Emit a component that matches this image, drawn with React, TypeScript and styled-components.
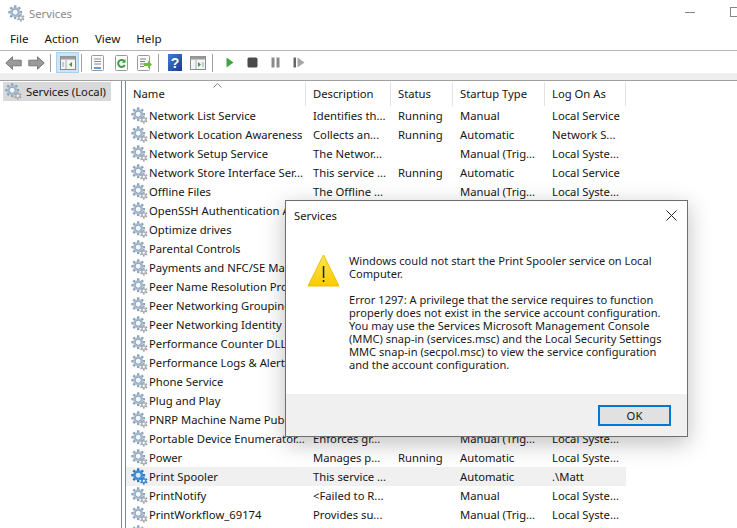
import React from 'react';
import styled, { createGlobalStyle } from 'styled-components';

const Global = createGlobalStyle`
  html, body { margin: 0; padding: 0; background: #fff; }
  #root { width: 737px; height: 528px; overflow: hidden; }
`;

const Page = styled.div`
  position: relative;
  width: 737px;
  height: 528px;
  overflow: hidden;
  background: #fff;
  font-family: "Noto Sans", "Open Sans", sans-serif;
  font-size: 11.25px;
  color: #151515;
  display: flex;
  flex-direction: column;
`;

const TitleBar = styled.div`
  height: 27px;
  display: flex;
  align-items: center;
  padding: 0 0 1px 8px;
  box-sizing: border-box;
  gap: 4px;
  color: #8a8a8a;
  position: relative;
  flex: none;
`;
const WinBtn = styled.div<{ $kind: 'min' | 'max' }>`
  position: absolute;
  box-sizing: border-box;
  ${p => p.$kind === 'min'
    ? 'left: 685px; top: 12px; width: 10px; height: 1px; background: #888;'
    : 'left: 730px; top: 7px; width: 10px; height: 10px; border: 1px solid #888;'}
`;
const MenuBar = styled.div`
  height: 23px;
  display: flex;
  align-items: center;
  padding: 1px 0 0 10px;
  box-sizing: content-box;
  gap: 16px;
  font-size: 11.6px;
  flex: none;
  border-bottom: 1px solid #b4b4b4;
  margin-top: -1px;
`;
const ToolBar = styled.div`
  height: 22px;
  padding: 1px 0 0 2px;
  box-sizing: border-box;
  display: flex;
  align-items: center;
  flex: none;
`;
const ToolBand = styled.div`
  height: 7px;
  flex: none;
  background: #eeeeee;
`;
const ToolBtn = styled.div<{ $w?: number; $on?: boolean }>`
  width: ${p => p.$w ?? 22}px;
  height: 21px;
  flex: none;
  display: flex;
  align-items: center;
  justify-content: center;
  box-sizing: border-box;
  ${p => p.$on ? 'background:#cce4f7;border:1px solid #a8d2f2;' : ''}
`;
const ToolSep = styled.div<{ $l: number; $r: number }>`
  width: 1px;
  height: 18px;
  flex: none;
  background: #a0a0a0;
  margin: 0 ${p => p.$r}px 0 ${p => p.$l}px;
`;
const Panes = styled.div`
  flex: 1;
  display: flex;
  min-height: 0;
  border-top: 1px solid #a0a0a0;
`;
const Tree = styled.div`
  width: 122px;
  flex: none;
  border-right: 1px solid #828790;
  padding: 1px 0 0 3px;
  box-sizing: border-box;
`;
const TreeItem = styled.div`
  display: flex;
  align-items: center;
  height: 19px;
  width: 108px;
  background: #d9d9d9;
  gap: 4px;
  padding: 0 0 1px 2px;
  white-space: nowrap;
  box-sizing: border-box;
`;
const ListPane = styled.div`
  margin-left: 3px;
  flex: 1;
  border-left: 1px solid #828790;
  padding-top: 1px;
  position: relative;
  min-width: 0;
`;
const Header = styled.div`
  display: flex;
  height: 24px;
  width: 500px;
`;
const HeadCell = styled.div<{ $w: number }>`
  width: ${p => p.$w}px;
  flex: none;
  padding: 0 0 2px 7px;
  box-sizing: border-box;
  border-right: 1px solid #e3e3e3;
  display: flex;
  align-items: center;
  position: relative;
`;
const SortMark = styled.svg`
  position: absolute;
  left: 87px;
  top: 1px;
`;
const Row = styled.div<{ $sel?: boolean }>`
  display: flex;
  height: 19px;
  width: 500px;
  align-items: center;
  background: ${p => p.$sel ? '#f0f0f0' : 'transparent'};
  white-space: nowrap;
`;
const Cell = styled.div<{ $w: number }>`
  width: ${p => p.$w}px;
  flex: none;
  padding-left: 7px;
  box-sizing: border-box;
`;
const NameCell = styled(Cell)`
  padding-left: 5px;
  display: flex;
  align-items: center;
  gap: 1px;
`;

const Dialog = styled.div`
  position: absolute;
  left: 285px;
  top: 200px;
  width: 403px;
  height: 237px;
  background: #fff;
  border: 1px solid #6e6e6e;
  box-sizing: border-box;
  box-shadow: 0 6px 22px rgba(0,0,0,.26);
  display: flex;
  flex-direction: column;
`;
const DialogTitle = styled.div`
  height: 30px;
  flex: none;
  display: flex;
  align-items: center;
  justify-content: space-between;
  padding: 0 10px 2px 8px;
  box-sizing: border-box;
`;
const DialogBody = styled.div`
  flex: 1;
  display: flex;
  padding: 23px 0 0 21px;
  gap: 9px;
`;
const Msg = styled.div`
  font-size: 11.1px;
  line-height: 13px;
  width: 320px;
  color: #1a1a1a;
  p { margin: 0 0 13px; }
`;
const DialogFoot = styled.div`
  height: 42px;
  flex: none;
  background: #f0f0f0;
  display: flex;
  align-items: center;
  justify-content: flex-end;
  padding-right: 16px;
`;
const OkBtn = styled.div`
  width: 73px;
  height: 21px;
  box-sizing: border-box;
  border: 2px solid #0078d7;
  background: #e1e1e1;
  display: flex;
  align-items: center;
  justify-content: center;
`;

const Gear = ({ strong }: { strong?: boolean }) => (
  <svg width="17" height="17" viewBox="0 0 17 17" style={{ flex: 'none' }}>
    <g transform="translate(7.2 7.2)">
      {[0, 45, 90, 135, 180, 225, 270, 315].map(a => (
        <rect key={a} x="-1.2" y="-6.9" width="2.4" height="3" fill={strong ? '#2a78c0' : '#8ba3bb'} transform={`rotate(${a})`} />
      ))}
      <circle r="5" fill={strong ? '#3f8fd6' : '#a9bed4'} />
      <circle r="3" fill={strong ? '#d5e9fb' : '#f5f8fb'} stroke={strong ? '#2a78c0' : '#7d94ac'} strokeWidth="0.8" />
    </g>
    <g transform="translate(12.8 12.8)">
      {[0, 60, 120, 180, 240, 300].map(a => (
        <rect key={a} x="-.8" y="-3.8" width="1.6" height="1.8" fill={strong ? '#2a78c0' : '#9a9fa6'} transform={`rotate(${a})`} />
      ))}
      <circle r="2.6" fill={strong ? '#3f8fd6' : '#b0b5bb'} />
      <circle r="1.1" fill="#fff" />
    </g>
  </svg>
);

const Arrow = ({ left }: { left?: boolean }) => (
  <svg width="17" height="14" viewBox="0 0 17 14">
    <path d={left ? 'M.8 7 7.500.8v3.400h8.700v5.600H7.500v3.400z' : 'M16.200 7 9.500.8v3.400H.8v5.600h8.700v3.400z'} fill="#9a9a9a" stroke="#6f6f6f" strokeWidth=".9" strokeLinejoin="round" />
  </svg>
);
const PaneIcon = ({ mark }: { mark: 'left' | 'right' }) => (
  <svg width="16" height="14" viewBox="0 0 16 14">
    <rect x=".5" y=".5" width="15" height="13" fill="#f4f4f4" stroke="#8a8a8a" />
    <rect x=".5" y=".5" width="15" height="3" fill="#9a9a9a" />
    <path d="M6 4v9" stroke="#aaa" />
    <path d={mark === 'left' ? 'M12 6v5L9 8.500z' : 'M8 6v5l3-2.500z'} fill="#3f9a3f" />
    <rect x={mark === 'left' ? 2 : 12} y="6" width="2" height="5" fill="#b5cfe6" />
  </svg>
);
const SheetIcon = ({ kind }: { kind: 'list' | 'refresh' | 'export' }) => (
  <svg width="16" height="16" viewBox="0 0 16 16">
    <rect x="1.500" y=".5" width="12" height="15" rx="1" fill="#fbfbfb" stroke="#9a9a9a" />
    {kind === 'list' && <path d="M4 4h7M4 6.500h7M4 9h7" stroke="#8a8a8a" />}
    {kind === 'list' && <rect x="4" y="12" width="7" height="2" fill="#5aa0dc" />}
    {kind === 'refresh' && <path d="M10.800 10a3.500 3.500 0 1 1-.6-4" fill="none" stroke="#3aa23a" strokeWidth="2" />}
    {kind === 'refresh' && <path d="M11.500 4v3.800h-3.800z" fill="#3aa23a" />}
    {kind === 'export' && <path d="M4 4h6M4 6.500h5M4 9h4M4 11.500h4" stroke="#7c7c7c" />}
    {kind === 'export' && <path d="M8 8h4V5.500L16 9.500 12 13.500V11H8z" fill="#6dbb3a" />}
  </svg>
);

const columns = [180, 85, 62, 92, 81];
const rows: [string, string, string, string, string, boolean?][] = [
  ['Network List Service', 'Identifies th...', 'Running', 'Manual', 'Local Service'],
  ['Network Location Awareness', 'Collects an...', 'Running', 'Automatic', 'Network S...'],
  ['Network Setup Service', 'The Networ...', '', 'Manual (Trig...', 'Local Syste...'],
  ['Network Store Interface Ser...', 'This service ...', 'Running', 'Automatic', 'Local Service'],
  ['Offline Files', 'The Offline ...', '', 'Manual (Trig...', 'Local Syste...'],
  ['OpenSSH Authentication A...', '', '', '', ''],
  ['Optimize drives', '', '', '', ''],
  ['Parental Controls', '', '', '', ''],
  ['Payments and NFC/SE Man...', '', '', '', ''],
  ['Peer Name Resolution Prot...', '', '', '', ''],
  ['Peer Networking Grouping', '', '', '', ''],
  ['Peer Networking Identity M...', '', '', '', ''],
  ['Performance Counter DLL ...', '', '', '', ''],
  ['Performance Logs & Alerts', '', '', '', ''],
  ['Phone Service', '', '', '', ''],
  ['Plug and Play', '', '', '', ''],
  ['PNRP Machine Name Publi...', '', '', '', ''],
  ['Portable Device Enumerator...', 'Enforces gr...', '', 'Manual (Trig...', 'Local Syste...'],
  ['Power', 'Manages p...', 'Running', 'Automatic', 'Local Syste...'],
  ['Print Spooler', 'This service ...', '', 'Automatic', '.\\Matt', true],
  ['PrintNotify', '<Failed to R...', '', 'Manual', 'Local Syste...'],
  ['PrintWorkflow_69174', 'Provides su...', '', 'Manual (Trig...', 'Local Syste...'],
  ['', '', '', '', ''],
];
const heads = ['Name', 'Description', 'Status', 'Startup Type', 'Log On As'];

export default function App() {
  return (
    <Page>
      <Global />
      <TitleBar>
        <Gear />
        <span>Services</span>
        <WinBtn $kind="min" />
        <WinBtn $kind="max" />
      </TitleBar>
      <MenuBar>
        <span>File</span><span>Action</span><span>View</span><span>Help</span>
      </MenuBar>
      <ToolBar>
        <ToolBtn><Arrow left /></ToolBtn>
        <ToolBtn $w={24}><Arrow /></ToolBtn>
        <ToolSep $l={2} $r={5} />
        <ToolBtn $on $w={23}><PaneIcon mark="left" /></ToolBtn>
        <ToolSep $l={2} $r={0} />
        <ToolBtn $w={31}><SheetIcon kind="list" /></ToolBtn>
        <ToolBtn $w={17}><SheetIcon kind="refresh" /></ToolBtn>
        <ToolBtn $w={28}><SheetIcon kind="export" /></ToolBtn>
        <ToolSep $l={0} $r={0} />
        <ToolBtn $w={31}>
          <svg width="14" height="17" viewBox="0 0 14 17">
            <defs>
              <linearGradient id="helpBg" x1="0" y1="0" x2="1" y2="1">
                <stop offset="0" stopColor="#3f7fd6" />
                <stop offset="1" stopColor="#1d3a8c" />
              </linearGradient>
            </defs>
            <rect width="14" height="17" fill="url(#helpBg)" />
            <text x="7" y="14" textAnchor="middle" fontSize="14" fontWeight="700" fill="#fff" fontFamily="Liberation Sans">?</text>
          </svg>
        </ToolBtn>
        <ToolBtn $w={16}><PaneIcon mark="right" /></ToolBtn>
        <ToolSep $l={6} $r={0} />
        <ToolBtn $w={33}><svg width="8" height="11" viewBox="0 0 8 11"><path d="M.5.5l7 5-7 5z" fill="#3fa63f" /></svg></ToolBtn>
        <ToolBtn $w={12}><svg width="11" height="11" viewBox="0 0 11 11"><rect x=".5" y=".5" width="10" height="10" rx="1.500" fill="#4a4a4a" /></svg></ToolBtn>
        <ToolBtn $w={34}><svg width="9" height="11" viewBox="0 0 9 11"><path d="M.5.5h3v10h-3zM5.500.5h3v10h-3z" fill="#8a8a8a" /></svg></ToolBtn>
        <ToolBtn $w={13}><svg width="12" height="11" viewBox="0 0 12 11"><path d="M.5.5h2.500v10H.5z" fill="#666" /><path d="M4.500.5l7 5-7 5z" fill="#a5a5a5" /></svg></ToolBtn>
      </ToolBar>
      <ToolBand />
      <Panes>
        <Tree>
          <TreeItem><Gear /><span>Services (Local)</span></TreeItem>
        </Tree>
        <ListPane>
          <Header>
            {heads.map((h, i) => (
              <HeadCell key={h} $w={columns[i]}>
                {h}
                {i === 0 && (
                  <SortMark width="9" height="5" viewBox="0 0 9 5">
                    <path d="M.5 4.500 4.500.5l4 4" fill="none" stroke="#888" />
                  </SortMark>
                )}
              </HeadCell>
            ))}
          </Header>
          {rows.map((r, i) => (
            <Row key={i} $sel={r[5]}>
              <NameCell $w={columns[0]}><Gear strong={r[5]} />{r[0]}</NameCell>
              <Cell $w={columns[1]}>{r[1]}</Cell>
              <Cell $w={columns[2]}>{r[2]}</Cell>
              <Cell $w={columns[3]}>{r[3]}</Cell>
              <Cell $w={columns[4]}>{r[4]}</Cell>
            </Row>
          ))}
        </ListPane>
      </Panes>
      <Dialog>
        <DialogTitle>
          <span>Services</span>
          <svg width="11" height="11" viewBox="0 0 11 11"><path d="M.5.5l10 10M10.500.5l-10 10" stroke="#222" /></svg>
        </DialogTitle>
        <DialogBody>
          <svg width="33" height="33" viewBox="0 0 33 33" style={{ flex: 'none' }}>
            <defs>
              <linearGradient id="warn" x1="0" y1="0" x2="0" y2="1">
                <stop offset="0" stopColor="#fde45a" />
                <stop offset="1" stopColor="#fbcb00" />
              </linearGradient>
            </defs>
            <path d="M16.500 1 32 32H1z" fill="url(#warn)" stroke="#ecbe00" strokeLinejoin="round" />
            <rect x="15.800" y="12" width="1.500" height="12" fill="#222" />
            <rect x="15.800" y="26" width="1.500" height="2" fill="#222" />
          </svg>
          <Msg>
            <p>Windows could not start the Print Spooler service on Local Computer.</p>
            <p>Error 1297: A privilege that the service requires to function properly does not exist in the service account configuration. You may use the Services Microsoft Management Console (MMC) snap-in (services.msc) and the Local Security Settings MMC snap-in (secpol.msc) to view the service configuration and the account configuration.</p>
          </Msg>
        </DialogBody>
        <DialogFoot>
          <OkBtn>OK</OkBtn>
        </DialogFoot>
      </Dialog>
    </Page>
  );
}
